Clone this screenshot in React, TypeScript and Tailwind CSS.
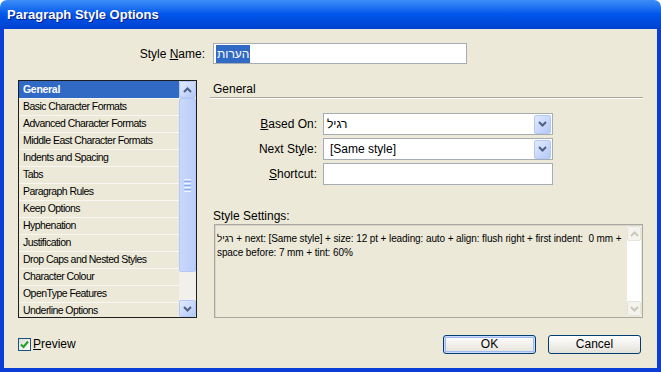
const sections = [
  "General",
  "Basic Character Formats",
  "Advanced Character Formats",
  "Middle East Character Formats",
  "Indents and Spacing",
  "Tabs",
  "Paragraph Rules",
  "Keep Options",
  "Hyphenation",
  "Justification",
  "Drop Caps and Nested Styles",
  "Character Colour",
  "OpenType Features",
  "Underline Options",
]

function Chevron({ up = false, color = "#4D6185" }: { up?: boolean; color?: string }) {
  return (
    <svg width="9" height="6" viewBox="0 0 9 6">
      <path
        d={up ? "M1 5 L4.5 1.5 L8 5" : "M1 1 L4.5 4.5 L8 1"}
        fill="none"
        stroke={color}
        strokeWidth="2"
      />
    </svg>
  )
}

// blue XP scroll/combo button
function ArrowButton({ up = false }: { up?: boolean }) {
  return (
    <div className="flex h-[17px] w-[17px] shrink-0 items-center justify-center rounded-[2px] border border-[#B4C8F6] bg-gradient-to-br from-[#E2EAFE] to-[#B4C8F7]">
      <Chevron up={up} />
    </div>
  )
}

function DisabledArrow({ up = false }: { up?: boolean }) {
  return (
    <div className="flex h-[15px] w-[14px] shrink-0 items-center justify-center rounded-[2px] border border-[#E6E4DA] bg-[#F4F3EE]">
      <Chevron up={up} color="#C9C7BA" />
    </div>
  )
}

function ComboBox({ value }: { value?: React.ReactNode }) {
  return (
    <div className="flex h-[22px] w-[230px] items-center border border-[#A5ACB2] bg-white pr-px">
      <div className="flex-1 pl-[3px] text-[12px]">{value}</div>
      <div className="flex h-[19px] w-[17px] items-center justify-center rounded-[2px] border border-[#B4C8F6] bg-gradient-to-br from-[#E2EAFE] to-[#B4C8F7]">
        <Chevron />
      </div>
    </div>
  )
}

export default function App() {
  return (
    <div className="flex h-[372px] w-[661px] flex-col font-['Liberation_Sans',Arial,sans-serif] text-black">
      {/* title bar */}
      <div className="flex h-[29px] shrink-0 items-center rounded-t-[7px] bg-gradient-to-b from-[#3D8EF8] via-[#0055EA] to-[#0041CF] pl-[7px]">
        <span className="text-[13px] font-bold text-white [text-shadow:1px_1px_#0A1E8C]">
          Paragraph Style Options
        </span>
      </div>

      <div className="flex flex-1 flex-col border-x-4 border-b-4 border-[#0A3ED6] bg-[#ECE9D8] px-[14px]">
        {/* style name */}
        <div className="mt-[14px] flex h-[21px] items-center gap-[8px]">
          <div className="w-[187px] text-right text-[12px]">
            Style <u>N</u>ame:
          </div>
          <div className="flex h-[21px] w-[254px] items-center border border-[#A5ACB2] bg-white pl-[2px]">
            <span className="bg-[#316AC5] px-px text-[12px] text-white">הערות</span>
          </div>
        </div>

        <div className="mt-[16px] flex h-[238px] gap-[13px]">
          {/* section list */}
          <div className="flex h-[238px] w-[179px] border border-[#1E1E1E]">
            <div className="flex flex-1 flex-col overflow-hidden">
              {sections.map((s, i) => (
                <div
                  key={s}
                  className={
                    i === 0
                      ? "flex h-[17px] shrink-0 items-center bg-[#316AC5] pl-[4px] text-[10.5px] font-bold tracking-[-0.3px] text-white"
                      : "flex h-[17px] shrink-0 items-center border-t border-[#F8F7F2] pl-[4px] text-[10.5px] tracking-[-0.55px]"
                  }
                >
                  {s}
                </div>
              ))}
            </div>
            <div className="flex w-[17px] flex-col bg-[#F1F0EA]">
              <ArrowButton up />
              <div className="flex h-[174px] items-center justify-center rounded-[2px] border border-[#B4C8F6] bg-gradient-to-r from-[#C9D8FC] to-[#BBCDF9]">
                <div className="flex flex-col gap-px">
                  <div className="h-px w-[7px] bg-[#EEF4FE]" />
                  <div className="h-px w-[7px] bg-[#8CB0F8]" />
                  <div className="h-px w-[7px] bg-[#EEF4FE]" />
                  <div className="h-px w-[7px] bg-[#8CB0F8]" />
                  <div className="h-px w-[7px] bg-[#EEF4FE]" />
                  <div className="h-px w-[7px] bg-[#8CB0F8]" />
                  <div className="h-px w-[7px] bg-[#EEF4FE]" />
                </div>
              </div>
              <div className="flex-1" />
              <ArrowButton />
            </div>
          </div>

          {/* right panel */}
          <div className="flex w-[433px] flex-col">
            <div className="flex h-[17px] items-center pl-[3px] text-[12px]">General</div>
            <div className="h-px bg-[#ACA899]" />
            <div className="h-px bg-white" />

            <div className="mt-[14px] flex flex-col gap-[3px]">
              <div className="flex items-center gap-[6px]">
                <div className="w-[107px] text-right text-[12px]">
                  <u>B</u>ased On:
                </div>
                <ComboBox value="רגיל" />
              </div>
              <div className="flex items-center gap-[6px]">
                <div className="w-[107px] text-right text-[12px]">
                  Next St<u>y</u>le:
                </div>
                <ComboBox value={<span className="pl-[3px]">[Same style]</span>} />
              </div>
              <div className="flex items-center gap-[6px]">
                <div className="w-[107px] text-right text-[12px]">
                  <u>S</u>hortcut:
                </div>
                <div className="h-[22px] w-[230px] border border-[#A5ACB2] bg-white" />
              </div>
            </div>

            <div className="mt-auto pl-[3px] text-[12px] leading-[13px]">Style Settings:</div>
            <div className="mt-[1px] ml-[4px] flex h-[94px] w-[429px] border border-[#A9A8A0] shadow-[inset_1px_1px_#D8D5C8]">
              <div className="flex-1 pt-[7px] pl-[2px] text-[10px] leading-[14px] tracking-[-0.1px]">
                רגיל + next: [Same style] + size: 12 pt + leading: auto + align: flush right + first indent:&nbsp; 0 mm +
                <br />
                space before: 7 mm + tint: 60%
              </div>
              <div className="my-[1px] mr-px flex w-[14px] flex-col bg-white">
                <DisabledArrow up />
                <div className="flex-1" />
                <DisabledArrow />
              </div>
            </div>
          </div>
        </div>

        {/* bottom row */}
        <div className="mt-[17px] flex h-[18px] items-center">
          <div className="flex h-[13px] w-[13px] items-center justify-center border border-[#1C5180] bg-gradient-to-br from-[#DCDCD7] to-white">
            <svg width="9" height="9" viewBox="0 0 9 9">
              <path d="M1 4.5 L3.5 7 L8 1.5" fill="none" stroke="#21A121" strokeWidth="2" />
            </svg>
          </div>
          <span className="ml-[2px] text-[12px]">
            <u>P</u>review
          </span>
          <div className="ml-auto mr-[2px] flex gap-[12px]">
            <button className="flex h-[19px] w-[93px] items-center justify-center rounded-[3px] border border-[#003C74] bg-gradient-to-b from-white to-[#E3E1D8] text-[12px] shadow-[inset_0_0_0_1px_#C9DAFC,inset_0_0_0_2px_#9DBBF1]">
              OK
            </button>
            <button className="flex h-[19px] w-[93px] items-center justify-center rounded-[3px] border border-[#003C74] bg-gradient-to-b from-white to-[#E3E1D8] text-[12px]">
              Cancel
            </button>
          </div>
        </div>
      </div>
    </div>
  )
}
